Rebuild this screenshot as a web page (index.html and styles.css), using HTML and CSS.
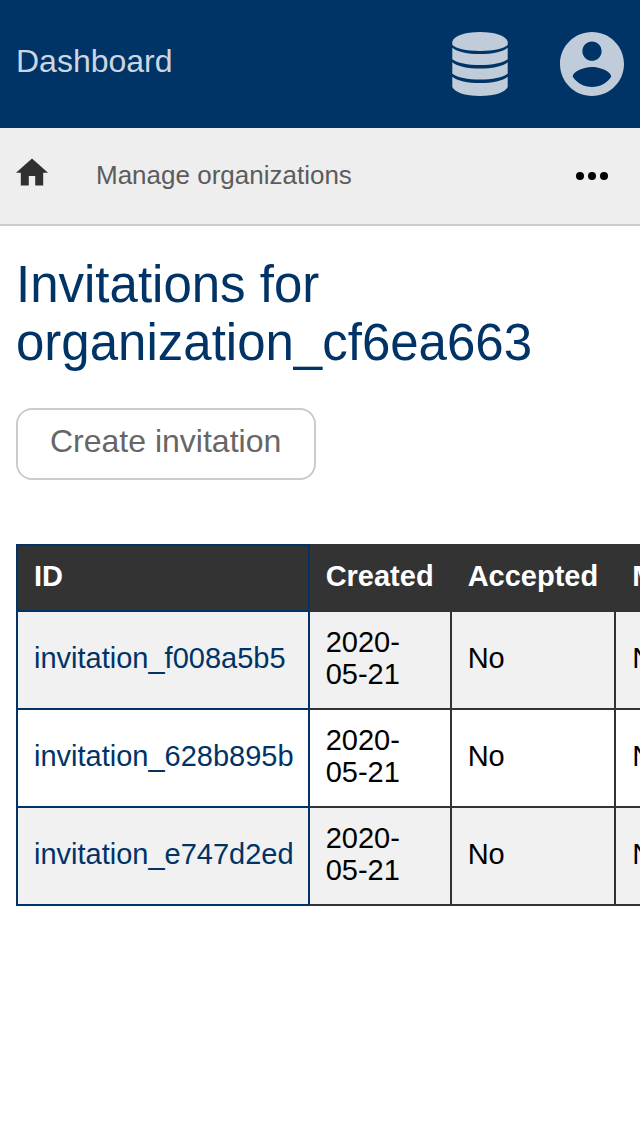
FILE: index.html
```
<!DOCTYPE html>
<html lang="en">
<head>
<meta charset="utf-8">
<meta name="viewport" content="width=device-width, initial-scale=1">
<title>Invitations</title>
<link rel="stylesheet" href="styles.css">
</head>
<body>
<header class="topbar">
  <a class="brand" href="#">Dashboard</a>
  <nav class="topbar-actions" aria-label="Account">
    <button class="icon-button" type="button" aria-label="Data">
      <svg width="56" height="64" viewBox="0 0 56 64" fill="currentColor" aria-hidden="true">
        <path d="M.3 9.500C2 4 12.500 0 28 0s26 4 27.700 9.500v3.500C53 16 42 19 28 19S3 16 .3 13z"/>
        <path d="M.3 15.700C5 19.800 16 22 28 22s23-2.200 27.700-6.300v11.500C51 30.800 40 33 28 33S5 30.800.3 27.200z"/>
        <path d="M.3 30.200C5 34.300 16 36.500 28 36.500s23-2.200 27.700-6.300v11.500C51 45.300 40 47.500 28 47.500S5 45.300.3 41.700z"/>
        <path d="M.3 44.700C5 48.800 16 51 28 51s23-2.200 27.700-6.300V55C53.500 60 43.500 64 28 64S2.500 60 .3 55z"/>
      </svg>
    </button>
    <button class="icon-button" type="button" aria-label="User">
      <svg width="64" height="64" viewBox="2 2 20 20" fill="currentColor" aria-hidden="true">
        <path d="M12 2C6.480 2 2 6.480 2 12s4.480 10 10 10 10-4.480 10-10S17.520 2 12 2zm0 3c1.660 0 3 1.340 3 3s-1.340 3-3 3-3-1.340-3-3 1.340-3 3-3zm0 14.200c-2.500 0-4.710-1.280-6-3.220.03-1.990 4-3.080 6-3.080 1.990 0 5.970 1.090 6 3.080-1.290 1.940-3.500 3.220-6 3.220z"/>
      </svg>
    </button>
  </nav>
</header>
<nav class="breadcrumbs" aria-label="Breadcrumb">
  <a class="home" href="#" aria-label="Home">
    <svg width="32" height="28" viewBox="2 3 20 17" fill="currentColor" aria-hidden="true"><path d="M10 20v-6h4v6h5v-8h3L12 3 2 12h3v8z"/></svg>
  </a>
  <a class="crumb" href="#">Manage organizations</a>
  <button class="more" type="button" aria-label="More">
    <svg width="32" height="8" viewBox="0 0 32 8" fill="currentColor" aria-hidden="true"><circle cx="4" cy="4" r="4"/><circle cx="16" cy="4" r="4"/><circle cx="28" cy="4" r="4"/></svg>
  </button>
</nav>
<main class="content">
  <h1 class="title">Invitations for organization_cf6ea663</h1>
  <button class="create" type="button">Create invitation</button>
  <div class="table-scroll">
    <table class="invitations">
      <thead>
        <tr><th scope="col">ID</th><th scope="col">Created</th><th scope="col">Accepted</th><th scope="col">Manager</th></tr>
      </thead>
      <tbody>
        <tr><td><a href="#">invitation_f008a5b5</a></td><td>2020-05-21</td><td>No</td><td>No</td></tr>
        <tr><td><a href="#">invitation_628b895b</a></td><td>2020-05-21</td><td>No</td><td>No</td></tr>
        <tr><td><a href="#">invitation_e747d2ed</a></td><td>2020-05-21</td><td>No</td><td>No</td></tr>
      </tbody>
    </table>
  </div>
</main>
</body>
</html>
```
FILE: styles.css
```
* {
  box-sizing: border-box;
}

body {
  margin: 0;
  background: #fff;
  color: #000;
  font-family: "Liberation Sans", Arial, sans-serif;
}

a {
  color: inherit;
  text-decoration: none;
}

button {
  font: inherit;
  cursor: pointer;
}

svg {
  display: block;
}

.topbar {
  display: flex;
  align-items: center;
  justify-content: space-between;
  padding: 32px 16px;
  background: #003366;
}

.brand {
  padding-bottom: 6px;
  color: #ccd6e0;
  font-size: 32px;
}

.topbar-actions {
  display: flex;
  gap: 52px;
}

.icon-button,
.more {
  padding: 0;
  border: 0;
  background: none;
}

.icon-button {
  color: #c0ccd9;
}

.breadcrumbs {
  display: flex;
  align-items: center;
  gap: 48px;
  min-height: 98px;
  padding: 0 32px 0 16px;
  border-bottom: 2px solid #ccc;
  background: #eee;
}

.home {
  padding-bottom: 8px;
  color: #303030;
}

.crumb {
  padding-bottom: 2px;
  color: #5c5c5c;
  font-size: 26px;
}

.more {
  margin-left: auto;
  color: #000;
}

.content {
  padding: 30px 0 0 16px;
}

.title {
  margin: 0 16px 36px 0;
  color: #003366;
  font-size: 51px;
  font-weight: 400;
  line-height: 58px;
}

.create {
  display: block;
  padding: 13px 33px 19px 32px;
  border: 2px solid #ccc;
  border-radius: 16px;
  background: #fff;
  color: #666;
  font-size: 32px;
  line-height: 36px;
}

.table-scroll {
  margin-top: 64px;
  overflow-x: auto;
  scrollbar-width: none;
}

.invitations {
  border-collapse: collapse;
  font-size: 29px;
  line-height: 32px;
}

.invitations th,
.invitations td {
  padding: 14px 16px 18px;
  border: 2px solid #333;
  text-align: left;
}

.invitations th {
  background: #333;
  color: #fff;
}

.invitations th:first-child,
.invitations td:first-child {
  padding-right: 14px;
  border-color: #003366;
}

.invitations td a {
  color: #003366;
}

.invitations tbody tr:nth-child(odd) {
  background: #f1f1f1;
}
```
